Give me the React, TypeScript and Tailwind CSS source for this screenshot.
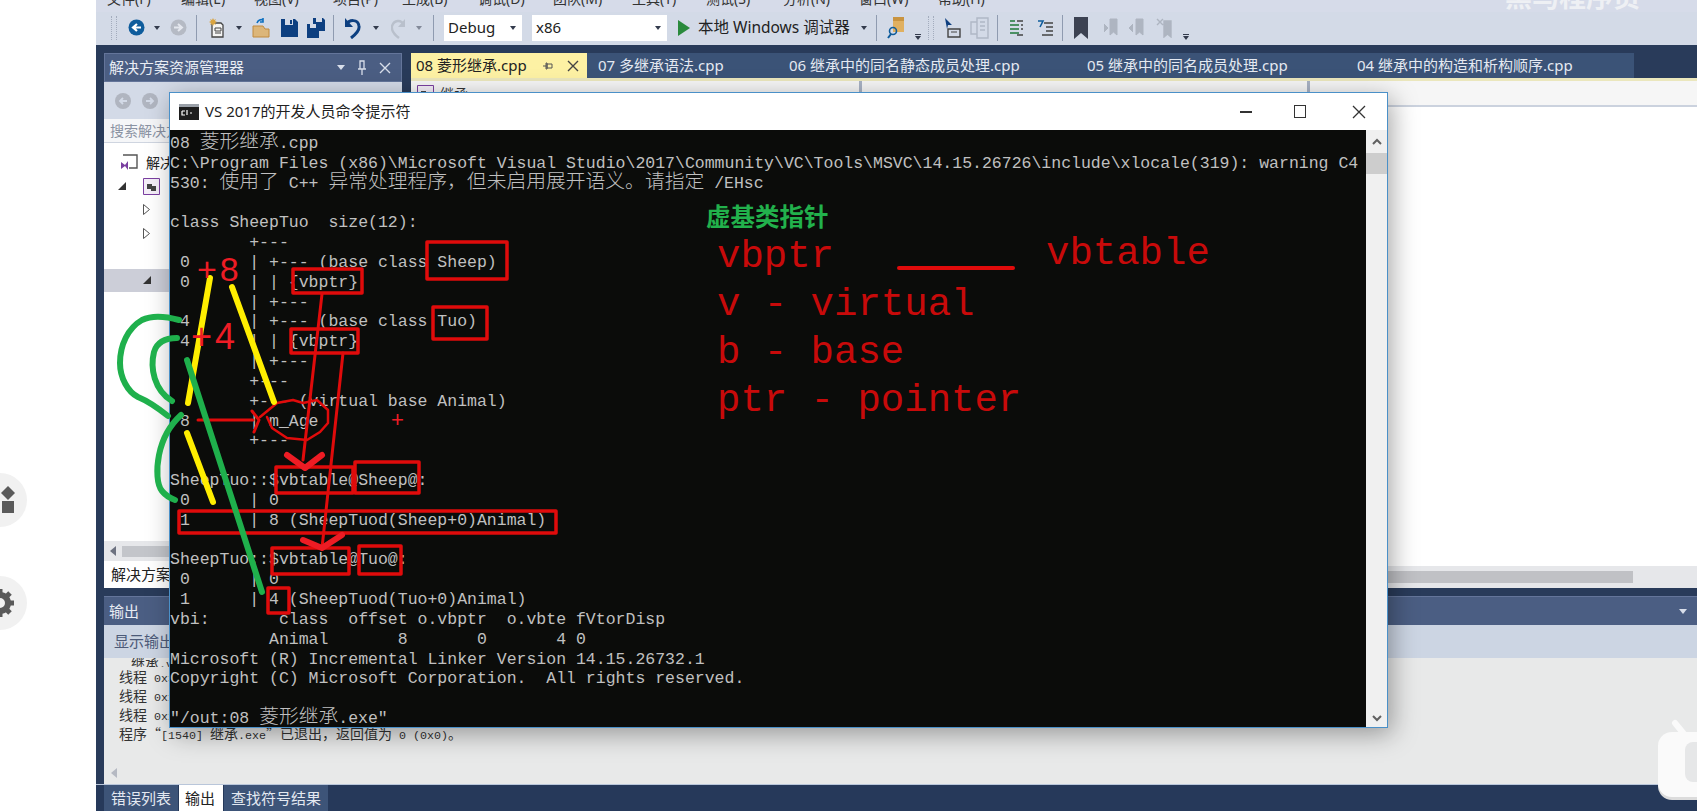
import React from "react";

const UI = "font-['Noto_Sans','Noto_Sans_CJK_SC',sans-serif]";

function Cells({ text, latin, cjk }: { text: string; latin: string; cjk: string }) {
  const parts = text.split(/([\u4e00-\u9fff，。“”]+)/);
  return (
    <>
      {parts.map((p, i) =>
        p === "" ? null : (
          <span key={i} className={i % 2 === 1 ? cjk : latin}>
            {p}
          </span>
        )
      )}
    </>
  );
}

const consoleLines = [
  "08 菱形继承.cpp",
  "C:\\Program Files (x86)\\Microsoft Visual Studio\\2017\\Community\\VC\\Tools\\MSVC\\14.15.26726\\include\\xlocale(319): warning C4",
  "530: 使用了 C++ 异常处理程序，但未启用展开语义。请指定 /EHsc",
  "",
  "class SheepTuo  size(12):",
  "        +---",
  " 0      | +--- (base class Sheep)",
  " 0      | | {vbptr}",
  "        | +---",
  " 4      | +--- (base class Tuo)",
  " 4      | | {vbptr}",
  "        | +---",
  "        +---",
  "        +--- (virtual base Animal)",
  " 8      | m_Age",
  "        +---",
  "",
  "SheepTuo::$vbtable@Sheep@:",
  " 0      | 0",
  " 1      | 8 (SheepTuod(Sheep+0)Animal)",
  "",
  "SheepTuo::$vbtable@Tuo@:",
  " 0      | 0",
  " 1      | 4 (SheepTuod(Tuo+0)Animal)",
  "vbi:       class  offset o.vbptr  o.vbte fVtorDisp",
  "          Animal       8       0       4 0",
  "Microsoft (R) Incremental Linker Version 14.15.26732.1",
  "Copyright (C) Microsoft Corporation.  All rights reserved.",
  "",
  "\"/out:08 菱形继承.exe\"",
];

function Drop({ className }: { className: string }) {
  return (
    <svg viewBox="0 0 6 4" className={`w-[6px] h-[4px] shrink-0 ${className}`}>
      <path d="M0 0h6L3 4z" fill="#333b4d" />
    </svg>
  );
}
function Sep({ className }: { className: string }) {
  return <div className={`w-px h-[26px] bg-[#8f9bb0] shrink-0 ${className}`} />;
}
function Grip({ className }: { className: string }) {
  return (
    <div
      className={`w-[6px] h-[24px] shrink-0 border-x border-dotted border-[#a3acbd] ${className}`}
    />
  );
}
function Overflow({ className }: { className: string }) {
  return (
    <div className={`w-[6px] h-[26px] shrink-0 flex flex-col justify-end items-center gap-[1px] pb-[1px] ${className}`}>
      <div className="w-[6px] h-px bg-[#333b4d]" />
      <svg viewBox="0 0 6 4" className="w-[6px] h-[4px]">
        <path d="M0 0h6L3 4z" fill="#333b4d" />
      </svg>
    </div>
  );
}

function Toolbar() {
  return (
    <div className="flex items-center h-[33px] pb-[2px] bg-[#d3dae7]">
      <Grip className="ml-[15px]" />
      <svg viewBox="0 0 17 17" className="w-[17px] h-[17px] ml-[11px] shrink-0">
        <circle cx="8.5" cy="8.5" r="8" fill="#0e5c9c" />
        <path d="M13 8.5H6M9 5L5 8.5 9 12" fill="none" stroke="#fff" strokeWidth="2.2" />
      </svg>
      <Drop className="ml-[9px]" />
      <svg viewBox="0 0 17 17" className="w-[17px] h-[17px] ml-[10px] shrink-0">
        <circle cx="8.5" cy="8.5" r="8" fill="#b5bac4" />
        <path d="M4 8.5h7M8 5l4 3.5L8 12" fill="none" stroke="#e4e7ee" strokeWidth="2" />
      </svg>
      <Sep className="ml-[9px]" />
      <svg viewBox="0 0 16 20" className="w-[16px] h-[20px] ml-[12px] shrink-0">
        <path d="M3 5h9l2 2v12H3z" fill="#f4f4f4" stroke="#444" strokeWidth="1.3" />
        <path d="M6 10h6v3H6zM6 15h6" fill="none" stroke="#444" />
        <path d="M4 0l1 2 2-1-1 2 2 1-2 1 1 2-2-1-1 2-1-2-2 1 1-2-2-1 2-1-1-2 2 1z" fill="#d9a441" />
      </svg>
      <Drop className="ml-[11px]" />
      <svg viewBox="0 0 18 20" className="w-[18px] h-[20px] ml-[10px] shrink-0">
        <path d="M1 8h10l2 3h4v8H1z" fill="#dcb67a" stroke="#c08a3e" />
        <path d="M5 5c1-3 4-4 6-3M11 0v4h-3" fill="none" stroke="#0e70c0" strokeWidth="1.6" />
      </svg>
      <svg viewBox="0 0 17 18" className="w-[17px] h-[18px] ml-[11px] shrink-0">
        <path d="M0 0h14l3 3v15H0z" fill="#0d3f80" />
        <path d="M4 0h8v6H4z" fill="#d3dae7" />
        <path d="M9 1h2v4H9z" fill="#0d3f80" />
        <path d="M3 10h11v8H3z" fill="#0d3f80" />
      </svg>
      <svg viewBox="0 0 18 20" className="w-[18px] h-[20px] ml-[9px] shrink-0">
        <path d="M6 0h10l2 2v11H6z" fill="#0d3f80" />
        <path d="M9 0h6v4H9z" fill="#d3dae7" />
        <path d="M0 6h10l2 2v12H0z" fill="#0d3f80" />
        <path d="M3 6h6v4H3z" fill="#d3dae7" />
      </svg>
      <Sep className="ml-[8px]" />
      <svg viewBox="0 0 16 22" className="w-[16px] h-[22px] ml-[11px] shrink-0">
        <path d="M1 8c3-6 12-6 13 1 1 5-4 9-8 12" fill="none" stroke="#0d3f80" strokeWidth="3" />
        <path d="M0 1v9h8z" fill="#0d3f80" />
      </svg>
      <Drop className="ml-[12px]" />
      <svg viewBox="0 0 14 22" className="w-[14px] h-[22px] ml-[12px] shrink-0">
        <path d="M13 8C10 2 3 3 1 9c-1 5 3 9 7 12" fill="none" stroke="#b9c0cc" strokeWidth="2.4" />
        <path d="M14 2v8H7z" fill="#b9c0cc" />
      </svg>
      <Drop className="ml-[11px] opacity-50" />
      <Sep className="ml-[11px]" />
      <div className={`ml-[10px] w-[78px] h-[26px] bg-white flex items-center justify-between pl-[4px] pr-[6px] shrink-0 ${UI} text-[15px] text-[#222]`}>
        <span>Debug</span>
        <Drop className="" />
      </div>
      <div className={`ml-[10px] w-[135px] h-[26px] bg-white flex items-center justify-between pl-[4px] pr-[6px] shrink-0 ${UI} text-[15px] text-[#222]`}>
        <span>x86</span>
        <Drop className="" />
      </div>
      <svg viewBox="0 0 12 16" className="w-[12px] h-[16px] ml-[11px] shrink-0">
        <path d="M0 0l12 8-12 8z" fill="#2a8a3c" />
      </svg>
      <span className={`ml-[8px] w-[155px] shrink-0 whitespace-nowrap ${UI} text-[15.5px] text-[#222]`}>本地 Windows 调试器</span>
      <Drop className="ml-[8px]" />
      <Sep className="ml-[9px]" />
      <svg viewBox="0 0 18 24" className="w-[18px] h-[24px] ml-[10px] shrink-0">
        <path d="M6 1h11v15H6z" fill="#e0b060" />
        <path d="M6 1h11v4H6z" fill="#c99440" />
        <circle cx="6" cy="15" r="3.5" fill="none" stroke="#0e5c9c" strokeWidth="1.6" />
        <path d="M4 18l-3 4" stroke="#0e5c9c" strokeWidth="2" />
      </svg>
      <Overflow className="ml-[10px]" />
      <Grip className="ml-[7px]" />
      <svg viewBox="0 0 17 22" className="w-[17px] h-[22px] ml-[10px] shrink-0">
        <path d="M1 1l7 7H4l-1 4z" fill="#0d3f80" />
        <path d="M4 12h12v8H4z" fill="none" stroke="#444" strokeWidth="1.4" />
        <path d="M7 15h6" stroke="#444" />
      </svg>
      <svg viewBox="0 0 19 22" className="w-[19px] h-[22px] ml-[9px] shrink-0 opacity-50">
        <path d="M7 1h11v20H7zM1 5h6v12H1zM10 5h5M10 9h5M10 13h5" fill="none" stroke="#8d96a6" strokeWidth="1.4" />
      </svg>
      <Sep className="ml-[8px]" />
      <svg viewBox="0 0 13 16" className="w-[13px] h-[16px] ml-[12px] shrink-0">
        <path d="M0 1h5M0 5h9M0 9h9M0 13h9" stroke="#1f7a3a" strokeWidth="1.4" />
        <path d="M7 1h6M11 5h2M11 9h2M7 15h6" stroke="#444" strokeWidth="1.4" />
      </svg>
      <svg viewBox="0 0 16 18" className="w-[16px] h-[18px] ml-[14px] shrink-0">
        <path d="M1 2h5l-3 6" fill="none" stroke="#0e5c9c" strokeWidth="1.6" />
        <path d="M7 4h9M9 8h7M9 12h7M5 16h11" stroke="#444" strokeWidth="1.4" />
      </svg>
      <Sep className="ml-[9px]" />
      <svg viewBox="0 0 14 22" className="w-[14px] h-[22px] ml-[11px] shrink-0">
        <path d="M0 0h14v22l-7-6-7 6z" fill="#3c4252" />
      </svg>
      <svg viewBox="0 0 16 20" className="w-[16px] h-[20px] ml-[15px] shrink-0">
        <path d="M7 1h7v16l-3.5-3L7 17zM1 6l4 4-4 4" fill="#aeb5c1" stroke="#aeb5c1" />
      </svg>
      <svg viewBox="0 0 17 20" className="w-[17px] h-[20px] ml-[9px] shrink-0">
        <path d="M8 1h7v16l-3.5-3L8 17zM5 6L1 10l4 4" fill="#aeb5c1" stroke="#aeb5c1" />
      </svg>
      <svg viewBox="0 0 17 20" className="w-[17px] h-[20px] ml-[11px] shrink-0">
        <path d="M8 3h7v16l-3.5-3L8 19zM1 1l6 6M7 1L1 7" fill="#aeb5c1" stroke="#aeb5c1" strokeWidth="1.4" />
      </svg>
      <Overflow className="ml-[10px]" />
    </div>
  );
}

function MenuBar() {
  const items = [
    ["文件(F)", "w-[74px]"],
    ["编辑(E)", "w-[73px]"],
    ["视图(V)", "w-[79px]"],
    ["项目(P)", "w-[69px]"],
    ["生成(B)", "w-[76px]"],
    ["调试(D)", "w-[75px]"],
    ["团队(M)", "w-[79px]"],
    ["工具(T)", "w-[74px]"],
    ["测试(S)", "w-[77px]"],
    ["分析(N)", "w-[76px]"],
    ["窗口(W)", "w-[79px]"],
    ["帮助(H)", "w-[80px]"],
  ];
  return (
    <div className="h-[12px] bg-[#d6dbe9] overflow-hidden flex items-end pl-[11px] relative">
      <div className="flex h-[20px] mb-[3px]">
        {items.map(([t, w]) => (
          <span key={t} className={`${w} shrink-0 ${UI} text-[14px] leading-[20px] text-[#333]`}>
            {t}
          </span>
        ))}
      </div>
      <span className={`ml-auto mr-[57px] -mb-[2px] ${UI} text-[27px] leading-[34px] font-bold text-[#eef0f4] whitespace-nowrap`}>
        黑马程序员
      </span>
    </div>
  );
}

function TreeRow({
  pad,
  active,
  children,
}: {
  pad: string;
  active?: boolean;
  children: React.ReactNode;
}) {
  return (
    <div className={`h-[23.5px] flex items-center ${pad} ${active ? "bg-[#ccced8]" : ""}`}>{children}</div>
  );
}

function SolutionPanel() {
  return (
    <div className="w-[298px] ml-[8px] flex flex-col shrink-0 bg-white">
      <div className={`h-[29px] bg-[#4b5e83] border border-[#64759a] flex items-center pl-[4px] pr-[10px] ${UI} text-[15px] text-[#e8ecf3]`}>
        <span className="flex-1">解决方案资源管理器</span>
        <svg viewBox="0 0 8 5" className="w-[8px] h-[5px] mr-[12px]">
          <path d="M0 0h8L4 5z" fill="#d8deea" />
        </svg>
        <svg viewBox="0 0 10 16" className="w-[10px] h-[16px] mr-[12px]">
          <path d="M3 1h4v8H3zM1 9h8M5 9v6" fill="none" stroke="#d8deea" strokeWidth="1.3" />
        </svg>
        <svg viewBox="0 0 12 12" className="w-[12px] h-[12px]">
          <path d="M1 1l10 10M11 1L1 11" stroke="#d8deea" strokeWidth="1.4" />
        </svg>
      </div>
      <div className="h-[37px] bg-[#d3dae7] flex items-center pl-[11px] gap-[11px]">
        <svg viewBox="0 0 16 16" className="w-[16px] h-[16px]">
          <circle cx="8" cy="8" r="8" fill="#b0b5c0" />
          <path d="M12 8H6M8 5L5 8l3 3" fill="none" stroke="#d3dae7" strokeWidth="1.8" />
        </svg>
        <svg viewBox="0 0 16 16" className="w-[16px] h-[16px]">
          <circle cx="8" cy="8" r="8" fill="#b0b5c0" />
          <path d="M4 8h6M8 5l3 3-3 3" fill="none" stroke="#d3dae7" strokeWidth="1.8" />
        </svg>
      </div>
      <div className={`h-[24px] bg-[#f5f6f8] border-b border-[#cfd5e0] pl-[6px] ${UI} text-[14px] leading-[24px] text-[#8b93a3]`}>
        搜索解决方案资源管理器
      </div>
      <div className="flex-1 flex flex-col pt-[8px]">
        <TreeRow pad="pl-[16px]">
          <svg viewBox="0 0 18 18" className="w-[18px] h-[18px] shrink-0">
            <path d="M3 1h14v13H9" fill="none" stroke="#555" strokeWidth="1.4" />
            <path d="M1 8l4 3 3-4v9l-3-4-4 3z" fill="#7a3fa0" />
          </svg>
          <span className={`ml-[8px] ${UI} text-[14px] text-[#222]`}>解决方案</span>
        </TreeRow>
        <TreeRow pad="pl-[14px]">
          <svg viewBox="0 0 8 8" className="w-[8px] h-[8px] shrink-0">
            <path d="M8 0v8H0z" fill="#333" />
          </svg>
          <svg viewBox="0 0 17 17" className="w-[17px] h-[17px] ml-[17px] shrink-0">
            <path d="M.5.5h16v16H.5z" fill="#f4eef8" stroke="#7a3fa0" />
            <path d="M4 6h5v5H4zM8 8h5v5H8z" fill="#444" />
          </svg>
        </TreeRow>
        <TreeRow pad="pl-[39px]">
          <svg viewBox="0 0 7 11" className="w-[7px] h-[11px] shrink-0">
            <path d="M.5.5l6 5-6 5z" fill="#fff" stroke="#555" />
          </svg>
        </TreeRow>
        <TreeRow pad="pl-[39px]">
          <svg viewBox="0 0 7 11" className="w-[7px] h-[11px] shrink-0">
            <path d="M.5.5l6 5-6 5z" fill="#fff" stroke="#555" />
          </svg>
        </TreeRow>
        <TreeRow pad="pl-[39px]">
          <span />
        </TreeRow>
        <TreeRow pad="pl-[39px]" active>
          <svg viewBox="0 0 8 8" className="w-[8px] h-[8px] shrink-0">
            <path d="M8 0v8H0z" fill="#333" />
          </svg>
        </TreeRow>
        <div className="flex-1" />
        <div className="h-[20px] bg-[#e6e7ea] flex items-center pl-[6px] gap-[6px]">
          <svg viewBox="0 0 6 10" className="w-[6px] h-[10px]">
            <path d="M6 0v10L0 5z" fill="#6d7280" />
          </svg>
          <div className="w-[200px] h-[11px] bg-[#c3c5ca]" />
        </div>
      </div>
      <div className={`h-[27px] bg-white pl-[7px] ${UI} text-[15px] leading-[27px] text-[#222]`}>解决方案资源管理器</div>
    </div>
  );
}

function EditorArea() {
  const tabs = [
    ["07 多继承语法.cpp", "w-[202px] pl-[11px]"],
    ["06 继承中的同名静态成员处理.cpp", "w-[298px] pl-[0px]"],
    ["05 继承中的同名成员处理.cpp", "w-[270px] pl-[0px]"],
    ["04 继承中的构造和析构顺序.cpp", "w-[277px] pl-[0px]"],
  ];
  return (
    <div className="flex-1 ml-[9px] flex flex-col min-w-0">
      <div className={`h-[25px] flex ${UI} text-[15px] leading-[25px]`}>
        <div className="w-[176px] bg-[#fdf1a4] text-[#222] flex items-center pl-[5px] shrink-0">
          <span className="whitespace-nowrap">08 菱形继承.cpp</span>
          <svg viewBox="0 0 10 8" className="w-[10px] h-[8px] ml-[16px]">
            <path d="M0 4h3M3 1h1v6H3zM4 2h5v4H4z" fill="none" stroke="#555" />
          </svg>
          <svg viewBox="0 0 12 12" className="w-[12px] h-[12px] ml-[14px]">
            <path d="M1 1l10 10M11 1L1 11" stroke="#444" strokeWidth="1.4" />
          </svg>
        </div>
        <div className="w-[1047px] bg-[#3b5377] text-[#e4e9f1] flex shrink-0">
          {tabs.map(([t, c]) => (
            <div key={t} className={`${c} shrink-0 whitespace-nowrap`}>
              {t}
            </div>
          ))}
        </div>
      </div>
      <div className="h-[3px] bg-[#ebe7bd]" />
      <div className="h-[26px] bg-[#f6f6f6] border-b-2 border-[#cbd2de] flex">
        <div className={`w-[451px] pl-[6px] flex items-center ${UI} text-[14px] text-[#333] border-r-[3px] border-[#a8b2c4]`}>
          <svg viewBox="0 0 17 17" className="w-[17px] h-[17px] mr-[6px]">
            <path d="M.5.5h16v16H.5z" fill="#f4eef8" stroke="#7a3fa0" />
            <path d="M4 6h5v5H4zM8 8h5v5H8z" fill="#444" />
          </svg>
          继承
        </div>
        <div className="w-[448px] border-r-[3px] border-[#a8b2c4]" />
      </div>
      <div className="flex-1 bg-white" />
      <div className="h-[22px] bg-[#e6e7ea] flex items-center">
        <div className="w-[1222px] h-[12px] bg-[#c0c1c5]" />
      </div>
    </div>
  );
}

function OutputPanel() {
  const rows = [
    "线程 0x3a0 已退出，返回值为 0 (0x0)。",
    "线程 0x1d4 已退出，返回值为 0 (0x0)。",
    "线程 0x2f8 已退出，返回值为 0 (0x0)。",
  ];
  const latin = "font-['Liberation_Mono',monospace] text-[11.67px]";
  const cjk = "font-['Noto_Sans_CJK_SC',sans-serif] text-[14px]";
  return (
    <div className="ml-[8px] h-[188px] flex flex-col">
      <div className={`h-[29px] bg-[#4b5e83] border-t border-[#64759a] flex items-center pl-[5px] pr-[10px] ${UI} text-[15px] text-[#e8ecf3] justify-between`}>
        <span>输出</span>
        <svg viewBox="0 0 8 5" className="w-[8px] h-[5px]">
          <path d="M0 0h8L4 5z" fill="#d8deea" />
        </svg>
      </div>
      <div className={`h-[33px] bg-[#ccd5e3] pl-[10px] ${UI} text-[15px] leading-[33px] text-[#4c5a78]`}>显示输出来源(S): 生成</div>
      <div className="flex-1 bg-[#e8e9e9] flex flex-col pl-[15px] overflow-hidden">
        <div className="h-[9px] overflow-hidden text-[#333] pl-[12px] leading-[9px]">
          <Cells text="继承.vcxproj" latin={latin} cjk={cjk} />
        </div>
        {rows.map((r) => (
          <div key={r} className="h-[19px] leading-[19px] whitespace-pre text-[#333]">
            <Cells text={r} latin={latin} cjk={cjk} />
          </div>
        ))}
        <div className="h-[19px] leading-[19px] whitespace-pre text-[#333]">
          <Cells text="程序“[1540] 继承.exe”已退出，返回值为 0 (0x0)。" latin={latin} cjk={cjk} />
        </div>
        <div className="flex-1 flex items-end pb-[6px] -ml-[8px]">
          <svg viewBox="0 0 6 10" className="w-[6px] h-[10px]">
            <path d="M6 0v10L0 5z" fill="#b5b9c2" />
          </svg>
        </div>
      </div>
    </div>
  );
}

function BottomTabs() {
  return (
    <div className={`h-[27px] border-t border-[#b9c6da] bg-[#26395a] pl-[8px] flex ${UI} text-[15px] leading-[26px]`}>
      <div className="w-[74px] bg-[#3d5478] text-[#e4e9f1] pl-[7px]">错误列表</div>
      <div className="w-[44px] ml-px bg-white text-[#222] pl-[6px]">输出</div>
      <div className="w-[104px] ml-px bg-[#3d5478] text-[#e4e9f1] pl-[7px]">查找符号结果</div>
    </div>
  );
}

function ConsoleWindow() {
  const latin = "";
  const cjk = "font-['Noto_Sans_CJK_SC',sans-serif] text-[19.8px] font-light leading-[0px]";
  return (
    <div className="absolute left-[169px] top-[92px] w-[1219px] h-[636px] bg-white border border-[#4a90c8] shadow-[4px_6px_24px_rgba(0,0,0,0.35)] flex flex-col">
      <div className="h-[37px] flex items-center pl-[9px] shrink-0">
        <svg viewBox="0 0 20 16" className="w-[20px] h-[16px] shrink-0">
          <path d="M0 0h20v16H0z" fill="#1d1d1d" />
          <path d="M0 0h20v3H0z" fill="#9aa0a8" />
          <path d="M3 7h3M3 7v4h3M8 6v5M11 9h2" stroke="#fff" strokeWidth="1.2" fill="none" />
        </svg>
        <span className={`ml-[6px] ${UI} text-[15px] text-[#222]`}>VS 2017的开发人员命令提示符</span>
        <div className="flex-1" />
        <div className="w-[12px] h-[2px] bg-[#333] mr-[42px]" />
        <div className="w-[12px] h-[13px] border-[1.5px] border-[#333] mr-[46px]" />
        <svg viewBox="0 0 14 14" className="w-[14px] h-[14px] mr-[21px]">
          <path d="M1 1l12 12M13 1L1 13" stroke="#333" strokeWidth="1.3" />
        </svg>
      </div>
      <div className="flex-1 flex min-h-0">
        <div className="flex-1 bg-[#0b0c0a] pt-[4px] overflow-hidden">
          {consoleLines.map((l, i) => (
            <div key={i} className="h-[19.83px] leading-[19.83px] whitespace-pre text-[#c0c0c0] font-['Liberation_Mono',monospace] text-[16.5px]">
              <Cells text={l} latin={latin} cjk={cjk} />
            </div>
          ))}
        </div>
        <div className="w-[21px] bg-[#f0f0f0] flex flex-col items-center shrink-0">
          <svg viewBox="0 0 10 7" className="w-[10px] h-[7px] mt-[8px]">
            <path d="M1 6l4-4 4 4" fill="none" stroke="#606060" strokeWidth="2" />
          </svg>
          <div className="w-[21px] h-[21px] bg-[#cdcdcd] mt-[8px]" />
          <div className="flex-1" />
          <svg viewBox="0 0 10 7" className="w-[10px] h-[7px] mb-[5px]">
            <path d="M1 1l4 4 4-4" fill="none" stroke="#606060" strokeWidth="2" />
          </svg>
        </div>
      </div>
    </div>
  );
}

function Box({ x, y, w, h }: { x: number; y: number; w: number; h: number }) {
  return <rect x={x} y={y} width={w} height={h} fill="none" stroke="#e00b0b" strokeWidth="3.5" />;
}

function Annotations() {
  return (
    <svg className="absolute left-0 top-0 w-[1697px] h-[811px] pointer-events-none" viewBox="0 0 1697 811" fill="none" strokeLinecap="round" strokeLinejoin="round">
      <Box x={427} y={242} w={80} h={37} />
      <Box x={293} y={269} w={69} h={24} />
      <Box x={433} y={307} w={54} h={32} />
      <Box x={291} y={329} w={67} h={24} />
      <Box x={276} y={467} w={77} h={26} />
      <Box x={355} y={462} w={64} h={31} />
      <Box x={179} y={511} w={377} h={22} />
      <Box x={272} y={548} w={77} h={26} />
      <Box x={359} y={546} w={42} h={28} />
      <Box x={268} y={588} w={21} h={25} />
      <path d="M322 294L303 460" stroke="#e00b0b" strokeWidth="3" />
      <path d="M343 353L322 548" stroke="#e00b0b" strokeWidth="3" />
      <path d="M287 455L305 468L322 455" stroke="#ed1c24" strokeWidth="6" />
      <path d="M303 540L322 548L342 535" stroke="#ed1c24" strokeWidth="6" />
      <path d="M198 420H253" stroke="#e00b0b" strokeWidth="3" />
      <path d="M252 411L259 420L254 432" stroke="#e00b0b" strokeWidth="3" />
      <path d="M260 417L277 403L293 400L303 403L317 400L328 410L328 423L320 432L307 440L287 438L272 428L267 417" stroke="#e00b0b" strokeWidth="2.5" />
      <path d="M210 278L188 403" stroke="#ffee00" strokeWidth="6" />
      <path d="M232 287L274 402" stroke="#ffee00" strokeWidth="6" />
      <path d="M187 433L213 502" stroke="#ffee00" strokeWidth="6" />
      <path d="M187 360L262 592" stroke="#1fb04c" strokeWidth="6" />
      <path d="M179 320C165 316 152 315 142 320C128 328 120 345 120 363C120 378 128 392 138 397C150 402 158 408 168 416" stroke="#1fb04c" strokeWidth="6" />
      <path d="M177 338C165 338 157 342 154 352C150 368 154 390 172 401" stroke="#1fb04c" strokeWidth="6" />
      <path d="M181 415C170 425 162 440 159 455C156 470 157 485 162 491C166 496 170 498 175 500" stroke="#1fb04c" strokeWidth="6" />
      <path d="M899 268H1013" stroke="#e00b0b" strokeWidth="4" />
      <path d="M1675 723l9 11" stroke="#fafafa" strokeWidth="6" />
    </svg>
  );
}

export default function App() {
  return (
    <div className="relative w-[1697px] h-[811px] overflow-hidden bg-white flex">
      <div className="w-[96px] shrink-0 flex flex-col">
        <div className="w-[27px] h-[54px] rounded-r-full bg-[#f1f1f1] mt-[473px] flex items-center overflow-hidden">
          <svg viewBox="0 0 16 28" className="w-[16px] h-[28px] shrink-0">
            <path d="M8 0l7 7-7 7-7-7z" fill="#5a5a5a" />
            <path d="M2 15h12v12H2z" fill="#5a5a5a" />
          </svg>
        </div>
        <div className="w-[27px] h-[54px] rounded-r-full bg-[#f1f1f1] mt-[49px] flex items-center overflow-hidden">
          <svg viewBox="0 0 30 30" className="w-[30px] h-[30px] shrink-0 -ml-[15px]">
            <circle cx="15" cy="15" r="8" fill="none" stroke="#5a5a5a" strokeWidth="6" />
            <path d="M15 1v6M15 23v6M1 15h6M23 15h6M5 5l4 4M21 21l4 4M25 5l-4 4M9 21l-4 4" stroke="#5a5a5a" strokeWidth="5" />
          </svg>
        </div>
      </div>
      <div className="flex-1 flex flex-col bg-[#293b5a] min-w-0">
        <MenuBar />
        <Toolbar />
        <div className="h-[8px]" />
        <div className="flex-1 flex min-h-0 mb-[8px]">
          <SolutionPanel />
          <EditorArea />
        </div>
        <OutputPanel />
        <BottomTabs />
      </div>
      <ConsoleWindow />
      <Annotations />
      <div className="absolute left-[197px] top-[249px] text-[#ee1c25] font-['Liberation_Sans',sans-serif] text-[34px] leading-[40px] tracking-[3px] whitespace-nowrap">+8</div>
      <div className="absolute left-[191px] top-[317px] text-[#ee1c25] font-['Liberation_Sans',sans-serif] text-[36px] leading-[40px] tracking-[3px] whitespace-nowrap">+4</div>
      <div className="absolute left-[391px] top-[408px] text-[#ee1c25] font-['Liberation_Sans',sans-serif] text-[22px] leading-[24px]">+</div>
      <div className="absolute left-[706px] top-[200px] text-[#22b14c] font-['Noto_Sans_CJK_SC',sans-serif] font-bold text-[24.5px] leading-[32px] whitespace-nowrap">虚基类指针</div>
      <div className="absolute left-[717px] top-[233px] text-[#c80a0a] font-['Liberation_Mono',monospace] text-[39px] leading-[48px] whitespace-pre">
        <div>vbptr</div>
        <div>v - virtual</div>
        <div>b - base</div>
        <div>ptr - pointer</div>
      </div>
      <div className="absolute left-[1046px] top-[230px] text-[#c80a0a] font-['Liberation_Mono',monospace] text-[39px] leading-[48px]">vbtable</div>
      <div className="absolute left-[1658px] top-[732px] w-[60px] h-[65px] rounded-[14px] bg-[#fafafa] shadow-[0_3px_0_#dcdcdc] pl-[27px] pt-[10px]">
        <div className="w-[20px] h-[40px] rounded-[8px] bg-[#e6e7e8]" />
      </div>
    </div>
  );
}
